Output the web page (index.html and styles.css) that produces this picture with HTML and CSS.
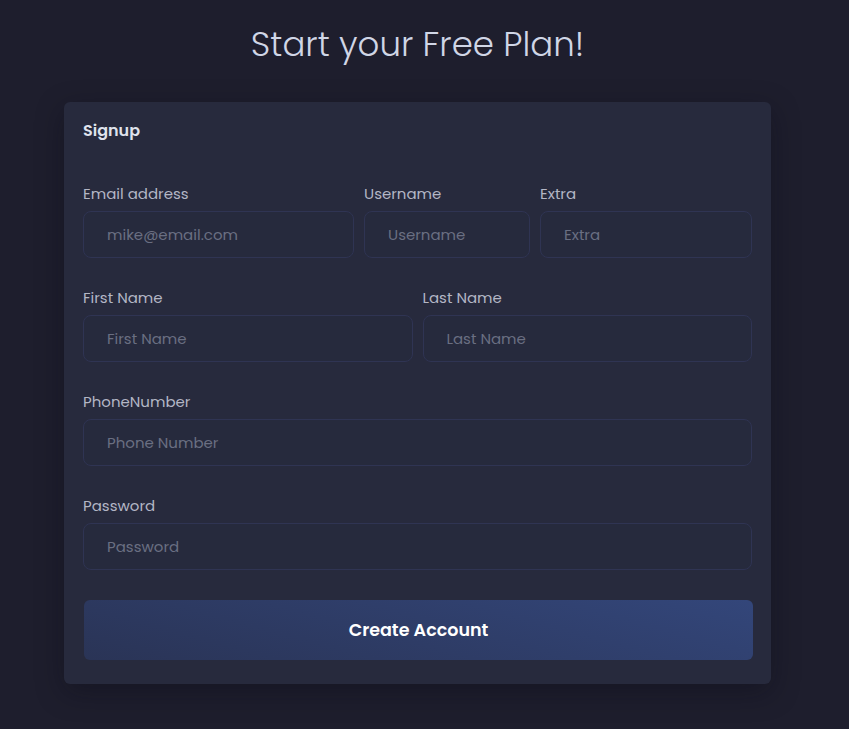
FILE: index.html
```html
<!DOCTYPE html>
<html lang="en">
<head>
<meta charset="utf-8">
<title>Signup</title>
<link rel="stylesheet" href="styles.css">
</head>
<body>
<main class="page">
  <h1 class="title">Start your Free Plan!</h1>
  <section class="card">
    <h2 class="card-title">Signup</h2>
    <form class="form">
      <div class="row row-3">
        <label class="field"><span class="label">Email address</span><input class="input" type="email" placeholder="mike@email.com"></label>
        <label class="field"><span class="label">Username</span><input class="input" type="text" placeholder="Username"></label>
        <label class="field"><span class="label">Extra</span><input class="input" type="text" placeholder="Extra"></label>
      </div>
      <div class="row row-2">
        <label class="field"><span class="label">First Name</span><input class="input" type="text" placeholder="First Name"></label>
        <label class="field"><span class="label">Last Name</span><input class="input" type="text" placeholder="Last Name"></label>
      </div>
      <div class="row">
        <label class="field"><span class="label">PhoneNumber</span><input class="input" type="text" placeholder="Phone Number"></label>
      </div>
      <div class="row">
        <label class="field"><span class="label">Password</span><input class="input" type="password" placeholder="Password"></label>
      </div>
      <button class="btn" type="button">Create Account</button>
    </form>
  </section>
</main>
</body>
</html>
```

FILE: styles.css
```css
* { box-sizing: border-box; }
html, body { margin: 0; padding: 0; }
body {
  background: #1e1e2d;
  font-family: "Poppins", "Inter", "Noto Sans", sans-serif;
  color: #b4b7c6;
  min-height: 729px;
}
.page {
  display: flex;
  flex-direction: column;
  align-items: center;
  padding-top: 22px;
  padding-right: 14px;
}
.title {
  margin: 0;
  font-size: 34px;
  line-height: 44px;
  font-weight: 300;
  color: #d0d6e6;
}
.card {
  margin-top: 36px;
  width: 707px;
  background: #272a3d;
  border-radius: 6px;
  padding: 17px 19px 24px 19px;
  box-shadow: 0 8px 28px rgba(10, 10, 20, 0.35);
}
.card-title {
  margin: 0;
  font-size: 16px;
  line-height: 24px;
  font-weight: 600;
  color: #dfe2ec;
}
.form {
  display: flex;
  flex-direction: column;
  margin-top: 40px;
}
.row {
  display: grid;
  grid-template-columns: 1fr;
  gap: 10px;
  margin-bottom: 29px;
}
.row-3 { grid-template-columns: 271px 166px 1fr; }
.row-2 { grid-template-columns: 1fr 1fr; }
.field {
  display: flex;
  flex-direction: column;
  min-width: 0;
}
.label {
  font-size: 15px;
  line-height: 22px;
  color: #b3b6c5;
  margin-bottom: 6px;
}
.input {
  height: 47px;
  width: 100%;
  background: #262a3d;
  border: 1px solid #2f3453;
  border-radius: 8px;
  padding: 0 23px;
  font-family: inherit;
  font-size: 15px;
  color: #c9ccd8;
  outline: none;
}
.input::placeholder { color: #6a6f82; }
.btn {
  margin-top: 1px;
  margin-left: 1px;
  height: 60px;
  width: 669px;
  border: none;
  border-radius: 6px;
  background: linear-gradient(15deg, #2a3456 0%, #33467a 100%);
  color: #ffffff;
  font-family: inherit;
  font-size: 17.5px;
  font-weight: 600;
  cursor: pointer;
}
```
